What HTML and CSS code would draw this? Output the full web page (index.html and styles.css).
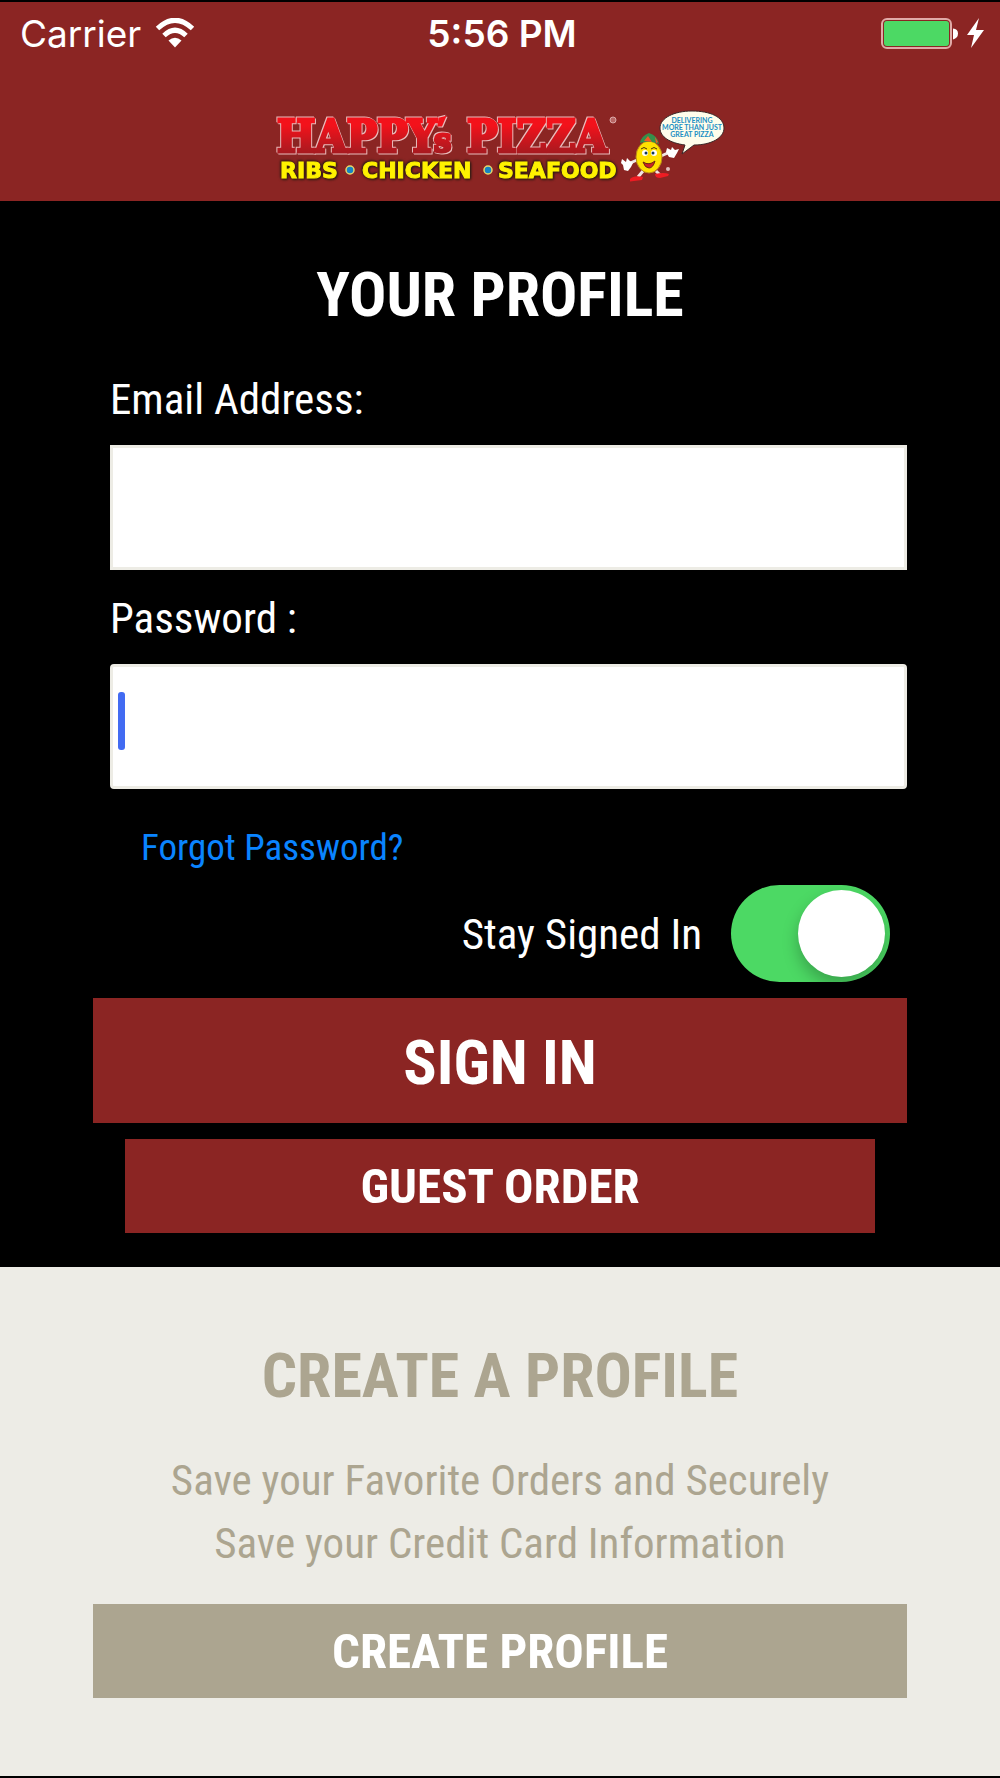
FILE: index.html
```html
<!DOCTYPE html>
<html lang="en">
<head>
<meta charset="utf-8">
<meta name="viewport" content="width=device-width, initial-scale=1">
<title>Happy's Pizza - Your Profile</title>
<link rel="stylesheet" href="styles.css">
</head>
<body>
<header class="header">
  <div class="status">
    <div class="status-left">
      <span>Carrier</span>
      <svg class="wifi" width="40" height="32" viewBox="0 0 40 32" aria-hidden="true">
        <g fill="none" stroke="#fff" stroke-width="5">
          <path d="M2.500 10.500Q20-6 37.500 10.500"/>
          <path d="M9 17.500Q20 7 31 17.500"/>
        </g>
        <path fill="#fff" d="M13.500 22.500Q20 17 26.500 22.500L20 29.500Z"/>
      </svg>
    </div>
    <time class="status-time">5:56 PM</time>
    <div class="status-right">
      <svg width="104" height="34" viewBox="0 0 104 34" aria-hidden="true">
        <rect x="2" y="2" width="69" height="29" rx="5" fill="#8b2523" stroke="#e0aaa7" stroke-width="2"/>
        <rect x="4" y="4" width="65" height="25" rx="3" fill="#4cd964"/>
        <path d="M73 11.500Q78 12 78 16.500T73 22.500Z" fill="#fff"/>
        <path d="M99 1L87 18H94L91 31L104 13H96Z" fill="#fff"/>
      </svg>
    </div>
  </div>
  <svg class="logo" width="452" height="80" viewBox="274 105 452 80" role="img" aria-label="Happy's Pizza. Ribs, chicken, seafood.">
    <defs>
      <linearGradient id="red" gradientUnits="userSpaceOnUse" x1="0" y1="117" x2="0" y2="153">
        <stop offset=".2" stop-color="#f3121b"/>
        <stop offset="1" stop-color="#a51a20"/>
      </linearGradient>
    </defs>
    <g class="logo-name">
      <text x="277" y="151">HAPPY</text>
      <text class="logo-small" x="434" y="151">s</text>
      <text x="467" y="151">PIZZA</text>
      <path d="M440 118l4-1-3 7h-2z"/>
    </g>
    <g class="logo-menu">
      <text x="280" y="177">RIBS</text>
      <text x="362" y="177">CHICKEN</text>
      <text x="498" y="177">SEAFOOD</text>
    </g>
    <g fill="#1684c4" stroke="#e6d66b" stroke-width="1.500">
      <circle cx="350" cy="169" r="4"/>
      <circle cx="488" cy="169" r="4"/>
    </g>
    <circle cx="613" cy="119" r="3" fill="#b86664" stroke="#dca9a8"/>
    <path d="M637 159L628 163M661 155L670 151M643 170L638 176M656 170L660 174" stroke="#f0e6e4" stroke-width="3" fill="none"/>
    <path d="M622 158l4 3 1-4 3 3 3 2-2 4-3 4-4-1-1-5-2-2zM667 147l4 2 1-3 3 3 4-1-2 4-3 5-5-1-3-5z" fill="#fff"/>
    <path d="M630 178q4-4 13-2l-1 3-12 1.500zM655 173q9-2 14 0l-1 2-8 2q-5 0-5-4z" fill="#ee1c23"/>
    <ellipse cx="649" cy="156" rx="13" ry="16" fill="#ffe100" stroke="#b98a1a"/>
    <path d="M640 142q1-7 9-10 9 3 10 11-9-4-19-1z" fill="#35904b"/>
    <path d="M644 140l4-5 4 6zM655 136l3 5-2 1z" fill="#f05a28"/>
    <path d="M641 148q3-3 6 0M651 148q3-3 6 0" stroke="#4a3010" fill="none"/>
    <ellipse cx="645" cy="152" rx="3" ry="3" fill="#fff"/>
    <ellipse cx="654" cy="152" rx="3" ry="3" fill="#fff"/>
    <circle cx="646" cy="152" r="1.500" fill="#13385c"/>
    <circle cx="653" cy="152" r="1.500" fill="#13385c"/>
    <path d="M643 161q6 4 12-1-2 7-6 7t-6-6z" fill="#cf2227" stroke="#6b2a12"/>
    <circle cx="668" cy="168" r="2" fill="#e2c0bf"/>
    <path d="M692 110C710 110 724 116 724 127C724 137 711 144 694 144L682 153L685 144C670 142 660 136 660 127C660 117 674 110 692 110Z" fill="#fffdeb" stroke="#3c2a2a"/>
    <g class="logo-bubble">
      <text x="692" y="122">DELIVERING</text>
      <text x="692" y="129">MORE THAN JUST</text>
      <text x="692" y="136">GREAT PIZZA</text>
    </g>
  </svg>
</header>
<main>
  <section class="panel sign-in">
    <h1 class="title">YOUR PROFILE</h1>
    <form class="form">
      <div class="field">
        <label for="email">Email Address:</label>
        <input class="input" id="email" type="email">
      </div>
      <div class="field">
        <label for="password">Password :</label>
        <div class="input-wrap">
          <input class="input rounded" id="password" type="password">
          <span class="caret"></span>
        </div>
      </div>
      <a class="forgot" href="#">Forgot Password?</a>
      <div class="stay">
        <label for="stay">Stay Signed In</label>
        <input class="switch" id="stay" type="checkbox" role="switch" checked>
      </div>
      <button class="button button-large" type="submit">SIGN IN</button>
      <button class="button button-guest" type="button">GUEST ORDER</button>
    </form>
  </section>
  <section class="panel create">
    <h2 class="title">CREATE A PROFILE</h2>
    <p class="pitch">Save your Favorite Orders and Securely<br>Save your Credit Card Information</p>
    <button class="button button-create" type="button">CREATE PROFILE</button>
  </section>
</main>
</body>
</html>
```
FILE: styles.css
```css
* {
  box-sizing: border-box;
}

body {
  margin: 0;
  padding: 2px 0 3px;
  background: #000;
  color: #fff;
  font-family: "Roboto Condensed", "Liberation Sans Narrow", Roboto, sans-serif;
  font-size: 43px;
  line-height: 52px;
}

.header {
  display: flex;
  flex-direction: column;
  align-items: center;
  height: 199px;
  background: #8b2523;
}

.status {
  display: grid;
  grid-template-columns: 1fr auto 1fr;
  align-items: center;
  width: 100%;
  height: 64px;
  margin-bottom: 40px;
  padding: 0 16px 0 20px;
  font-family: Inter, sans-serif;
  font-size: 37px;
}

.status-left {
  display: flex;
  align-items: center;
  gap: 14px;
}

.status-time {
  font-weight: 600;
}

.status-right {
  display: flex;
  justify-content: flex-end;
}

.logo {
  display: block;
}

.logo-name {
  fill: url(#red);
  stroke: url(#red);
  stroke-width: 3px;
  font: bold 45px "DejaVu Serif Condensed", "DejaVu Serif", serif;
  filter: drop-shadow(1px 1px 0 #e9bcbc) drop-shadow(-1px -1px 0 #e9bcbc);
}

.logo-small {
  font-size: 34px;
}

.logo-menu {
  fill: #fff200;
  stroke: #fff200;
  stroke-width: 1px;
  font: bold 22px "DejaVu Sans", sans-serif;
  filter: drop-shadow(1px 1px 1px #2c1b12) drop-shadow(-1px -1px 1px #2c1b12);
}

.logo-bubble {
  fill: #1c8fc4;
  font: bold 7px Lato, sans-serif;
  text-anchor: middle;
}

.panel {
  display: flex;
  flex-direction: column;
  padding: 0 93px;
}

.title {
  margin: 0;
  font-size: 62px;
  font-weight: 700;
  line-height: 76px;
  text-align: center;
}

.sign-in {
  padding-top: 56px;
  padding-bottom: 34px;
}

.form {
  display: flex;
  flex-direction: column;
  margin-top: 40px;
}

.field {
  display: flex;
  flex-direction: column;
  gap: 20px;
  margin: 0 0 22px 17px;
}

.input-wrap {
  position: relative;
  display: flex;
}

.input {
  width: 100%;
  height: 125px;
  padding: 0 20px;
  border: 3px solid #edece5;
  border-radius: 0;
  background: #fff;
  color: #000;
  font: inherit;
  outline: none;
}

.rounded {
  border-radius: 4px;
}

.caret {
  position: absolute;
  top: 28px;
  left: 8px;
  width: 7px;
  height: 58px;
  border-radius: 3px;
  background: #426bf2;
}

.forgot {
  align-self: flex-start;
  margin: 15px 0 15px 48px;
  color: #0a84ff;
  font-size: 37px;
  line-height: 44px;
  text-decoration: none;
}

.stay {
  display: flex;
  align-items: center;
  justify-content: flex-end;
  gap: 29px;
  margin: 0 17px 16px 0;
}

.switch {
  appearance: none;
  width: 159px;
  height: 97px;
  margin: 0;
  padding: 5px;
  border-radius: 49px;
  background: #4cd964;
  overflow: hidden;
}

.switch::before {
  content: "";
  display: block;
  width: 87px;
  height: 87px;
  border-radius: 50%;
  background: #fff;
  box-shadow: 0 8px 16px rgba(0, 0, 0, 0.25);
}

.switch:checked::before {
  margin-left: auto;
}

.button {
  height: 94px;
  padding: 2px 0 0;
  border: 0;
  background: #8b2523;
  color: #fff;
  font: 700 49px/60px "Roboto Condensed", "Liberation Sans Narrow", Roboto, sans-serif;
}

.button-large {
  height: 125px;
  padding-top: 4px;
  font-size: 62px;
}

.button-guest {
  margin: 16px 32px 0;
}

.create {
  padding-top: 71px;
  padding-bottom: 78px;
  background: #edece6;
  color: #aca590;
}

.pitch {
  margin: 35px 0 29px;
  line-height: 63px;
  text-align: center;
}

.button-create {
  background: #aca590;
}
```
